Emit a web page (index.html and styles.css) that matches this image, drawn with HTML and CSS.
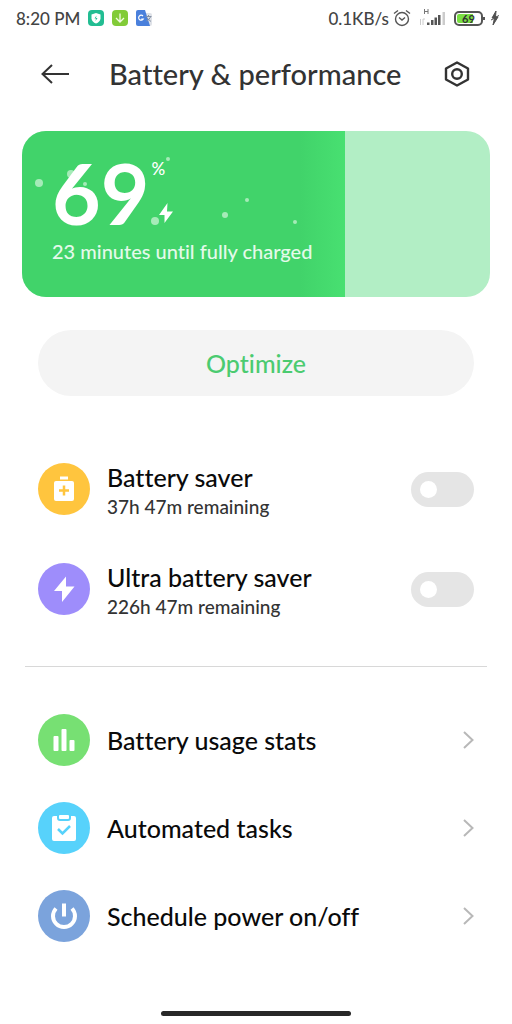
FILE: index.html
```html
<!DOCTYPE html>
<html lang="en">
<head>
<meta charset="utf-8">
<meta name="viewport" content="width=device-width, initial-scale=1">
<title>Battery &amp; performance</title>
<link rel="stylesheet" href="styles.css">
</head>
<body>
<div class="screen">
  <div class="status">
    <span class="clock">8:20 PM</span>
    <svg class="app" width="16" height="16" viewBox="0 0 16 16"><rect width="16" height="16" rx="4" fill="#22bd92"/><path d="M8 3l4.500 1.500v4Q12 12 8 13.500Q4 12 3.500 8.500v-4z" fill="#fff"/><path d="M8.500 5.500L6.500 8.500h1.500L7.500 11l2-3H8z" fill="#22bd92"/></svg>
    <svg class="app" width="16" height="16" viewBox="0 0 16 16"><rect width="16" height="16" rx="4" fill="#82cb38"/><path d="M8 3.500v8M4 8l4 4 4-4" fill="none" stroke="#f3fbe4" stroke-width="1.300"/></svg>
    <svg class="app" width="16" height="16" viewBox="0 0 16 16"><rect x="5" y="3" width="11" height="13" rx="2" fill="#dfe2e8"/><path d="M2 0h7l5 16H2Q0 16 0 14V2Q0 0 2 0z" fill="#4a80dc"/><path d="M7 6a2.500 2.500 0 1 0 .3 3H5.300" fill="none" stroke="#fff" stroke-width="1.200"/><path d="M9.500 6.500h6M12.500 5v1.500M14.500 7Q13.500 9.500 10.500 11M11 8l4 3.500" fill="none" stroke="#8491a5"/></svg>
    <span class="speed">0.1KB/s</span>
    <svg class="alarm" width="18" height="18" viewBox="0 0 18 18" fill="none" stroke="#555" stroke-width="1.400"><circle cx="9" cy="10" r="6.500"/><path d="M1 4.500L5 1.500M17 4.500L13 1.500M6 8.500L9 11l3-2.500"/></svg>
    <svg class="signal" width="27" height="18" viewBox="0 0 27 18"><path d="M5.500 0v5M9 0v5M5.500 2.500H9" stroke="#777" fill="none"/><path d="M1.500 10v6M4 10v6M4 10h2" stroke="#ccc" fill="none"/><path d="M8 13.500h2.500V16H8zM12 11h2.500v5H12zM15.500 8.500H18V16h-2.500zM19 6h2.500v10H19z" fill="#555"/><path d="M23.500 3H26v13h-2.500z" fill="#ccc"/></svg>
    <span class="batt"><span class="batt-level">69</span></span>
    <svg width="8" height="14" viewBox="0 0 8 14"><path d="M5 0L1 7h2.500L2 14 7 6H4.500zM0 9l4-2M4 6.500l4-2" fill="#505050" stroke="#505050"/></svg>
  </div>

  <header class="header">
    <button class="icon-btn" aria-label="Back"><svg width="28" height="20" viewBox="0 0 28 20" fill="none" stroke="#333" stroke-width="2"><path d="M28 10H1.500M11 1L1.500 10 11 19"/></svg></button>
    <h1 class="title">Battery &amp; performance</h1>
    <button class="icon-btn" aria-label="Settings"><svg width="26" height="26" viewBox="0 0 26 26" fill="none" stroke="#333" stroke-width="2.400"><path d="M13 1.500L24 7.500v11L13 24.500 2 18.500v-11z" stroke-linejoin="round"/><circle cx="13" cy="13" r="4.800"/></svg></button>
  </header>

  <main>
    <section class="card">
      <div class="level" style="width:69%"></div>
      <svg class="dots" width="320" height="160" viewBox="0 0 320 160" fill="#a5ebb8"><circle cx="17" cy="52" r="4"/><circle cx="49" cy="43" r="4"/><circle cx="63" cy="53" r="2"/><circle cx="146" cy="28" r="2"/><circle cx="133" cy="90" r="4"/><circle cx="203" cy="84" r="3"/><circle cx="225" cy="69" r="2"/><circle cx="273" cy="91" r="2"/></svg>
      <div class="card-text">
        <div class="charge">
          <span class="number">69</span>
          <span class="side"><span>%</span><svg width="14" height="20" viewBox="0 0 14 20"><path d="M8.500 0L0 12h5.500v8L14 8.500H8z" fill="#fff"/></svg></span>
        </div>
        <p class="until">23 minutes until fully charged</p>
      </div>
    </section>

    <button class="optimize">Optimize</button>

    <div class="modes">
      <label class="row" for="saver">
        <svg class="badge" viewBox="0 0 52 52"><circle cx="26" cy="26" r="26" fill="#ffc53e"/><path d="M22 13.500h8v3h-8z" fill="#fff"/><rect x="16" y="18" width="20" height="20" rx="2" fill="#fff"/><path d="M26 22.500v10M21 27.500h10" stroke="#ffc53e" stroke-width="2.500"/></svg>
        <span class="text"><span class="name">Battery saver</span><span class="sub">37h 47m remaining</span></span>
        <input class="switch" type="checkbox" id="saver">
      </label>
      <label class="row" for="ultra">
        <svg class="badge" viewBox="0 0 52 52"><circle cx="26" cy="26" r="26" fill="#9e8dfb"/><path d="M28 13.500L16 28h8v11L36.500 23.500H28z" fill="#fff"/></svg>
        <span class="text"><span class="name">Ultra battery saver</span><span class="sub">226h 47m remaining</span></span>
        <input class="switch" type="checkbox" id="ultra">
      </label>
    </div>

    <hr class="rule">

    <nav class="links">
      <a class="row" href="#stats">
        <svg class="badge" viewBox="0 0 52 52"><circle cx="26" cy="26" r="26" fill="#77e073"/><g fill="#fff"><rect x="15.500" y="22" width="5" height="15" rx="1"/><rect x="23.500" y="15" width="5" height="22" rx="1"/><rect x="31.500" y="26" width="5" height="11" rx="1"/></g></svg>
        <span class="text name">Battery usage stats</span>
        <svg class="chevron" viewBox="0 0 11 18"><path d="M1 1l8.500 8L1 17"/></svg>
      </a>
      <a class="row" href="#tasks">
        <svg class="badge" viewBox="0 0 52 52"><circle cx="26" cy="26" r="26" fill="#57d2fb"/><path d="M16 14h3v2q0 3 3 3h8q3 0 3-3v-2h3q2 0 2 2v21q0 2-2 2H16q-2 0-2-2V16q0-2 2-2z" fill="#fff"/><rect x="21" y="13" width="10" height="4" rx="1" fill="#fff"/><path d="M20 27l4.500 4.500L32 24" fill="none" stroke="#57d2fb" stroke-width="2.500"/></svg>
        <span class="text name">Automated tasks</span>
        <svg class="chevron" viewBox="0 0 11 18"><path d="M1 1l8.500 8L1 17"/></svg>
      </a>
      <a class="row" href="#schedule">
        <svg class="badge" viewBox="0 0 52 52"><circle cx="26" cy="26" r="26" fill="#7ba3dc"/><path d="M18 18.500A11 11 0 1 0 34 18.500M26 13.500v13" fill="none" stroke="#fff" stroke-width="4"/></svg>
        <span class="text name">Schedule power on/off</span>
        <svg class="chevron" viewBox="0 0 11 18"><path d="M1 1l8.500 8L1 17"/></svg>
      </a>
    </nav>
  </main>
  <div class="handle"></div>
</div>
</body>
</html>
```
FILE: styles.css
```css
* { box-sizing: border-box; }
body { margin: 0; background: #fff; color: #0a0a0a; font-family: Lato, "Noto Sans", sans-serif; font-weight: 500; font-variant-ligatures: none; }
button { border: 0; padding: 0; background: none; font: inherit; font-variant-ligatures: none; color: inherit; cursor: pointer; }
.screen { min-height: 100vh; display: flex; flex-direction: column; padding-bottom: 8px; }
.status { display: flex; align-items: center; height: 36px; padding: 0 13px 0 16px; color: #444; font-size: 17px; }
.clock { margin-right: 8px; }
.app { margin-right: 8px; }
.speed { margin-left: auto; margin-right: 4px; }
.alarm { margin-right: 8px; }
.signal { margin-right: 8px; }
.batt { position: relative; width: 29px; height: 15px; border: 2px solid #555; border-radius: 5px; padding: 1px; margin-right: 8px; }
.batt::after { content: ""; position: absolute; right: -4px; top: 4px; width: 2px; height: 3px; background: #555; }
.batt-level { display: block; height: 9px; border-radius: 2px; background: linear-gradient(90deg, #7ae043 69%, #fff 69%); font-size: 11px; line-height: 9px; font-weight: 700; text-align: center; color: #333; }
.header { display: flex; align-items: center; height: 76px; padding: 0 42px 0 41px; }
.icon-btn { display: flex; }
.title { flex: 1; margin: 0 0 0 40px; font-size: 29px; line-height: 36px; font-weight: 500; color: #333; }
.card { position: relative; display: flex; min-height: 166px; margin: 19px 22px 0; border-radius: 24px; overflow: hidden; background: #b2eec5; color: #fff; }
.level { position: absolute; inset: 0 auto 0 0; background: linear-gradient(90deg, #41d36a 86%, #48e071); }
.dots { position: absolute; left: 0; top: 0; }
.card-text { position: relative; padding: 24px 30px; }
.charge { display: flex; gap: 2px; height: 82px; }
.number { font-size: 84px; line-height: 76px; font-weight: 700; }
.side { display: flex; flex-direction: column; align-items: flex-start; gap: 24px; padding-top: 4px; font-size: 17px; line-height: 20px; }
.side svg { margin-left: 8px; }
.until { margin: 0; font-size: 20px; line-height: 28px; color: #e4faea; }
.optimize { display: block; width: calc(100% - 76px); height: 66px; margin: 33px 38px 0; border-radius: 33px; background: #f4f4f4; color: #4bcb70; font-size: 25px; }
.modes { display: grid; gap: 36px; margin-top: 61px; padding: 0 38px; }
.row { display: flex; align-items: center; min-height: 64px; color: inherit; text-decoration: none; }
.badge { width: 52px; height: 52px; flex: none; margin-right: 17px; }
.text { flex: 1; }
.name { font-size: 25px; line-height: 32px; }
.text .name, .sub { display: block; }
.text .name { padding-top: 4px; }
.sub { font-size: 19px; line-height: 28px; color: #333; }
.switch { appearance: none; display: flex; align-items: center; width: 63px; height: 35px; margin: 0; padding: 0 9px; border-radius: 18px; background: #e5e5e5; }
.switch::before { content: ""; width: 17px; height: 17px; border-radius: 50%; background: #fff; }
.switch:checked { background: #41d36a; justify-content: flex-end; }
.rule { width: calc(100% - 50px); height: 0; margin: 45px 25px 0; border: 0; border-top: 1px solid #d8d8d8; }
.links { display: grid; gap: 24px; margin-top: 41px; padding: 0 38px; }
.chevron { width: 11px; height: 18px; fill: none; stroke: #b8b8b8; stroke-width: 2; }
.handle { width: 37%; height: 5px; margin: auto auto 0; border-radius: 3px; background: #282828; }
```
